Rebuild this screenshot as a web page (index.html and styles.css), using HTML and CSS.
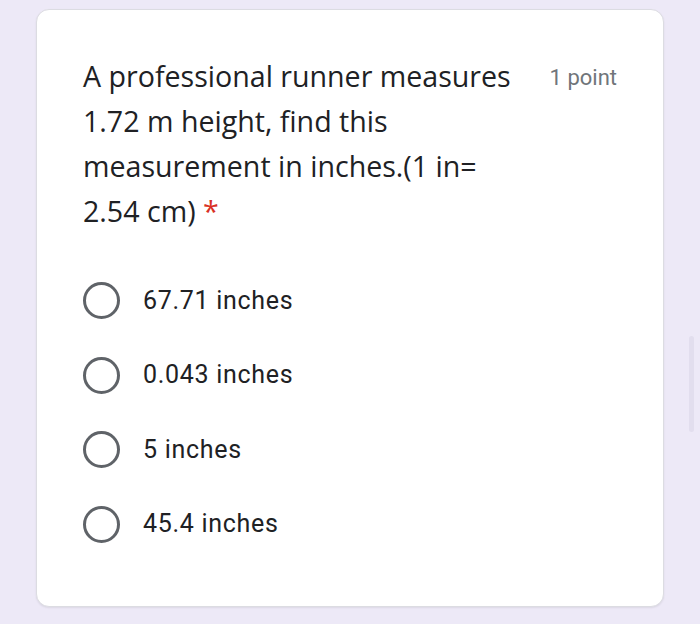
FILE: index.html
```html
<!DOCTYPE html>
<html>
<head>
<meta charset="utf-8">
<link rel="stylesheet" href="styles.css">
</head>
<body>
<div class="page">
  <div class="card">
    <div class="header">
      <div class="title">A professional runner measures<br>1.72 m height, find this<br>measurement in inches.(1 in=<br>2.54 cm) <span class="req">*</span></div>
      <div class="points">1 point</div>
    </div>
    <div class="choices">
      <div class="choice"><span class="radio"></span><span class="label">67.71 inches</span></div>
      <div class="choice"><span class="radio"></span><span class="label">0.043 inches</span></div>
      <div class="choice"><span class="radio"></span><span class="label">5 inches</span></div>
      <div class="choice"><span class="radio"></span><span class="label">45.4 inches</span></div>
    </div>
  </div>
  <div class="scrollbar"></div>
</div>
</body>
</html>
```
FILE: styles.css
```css
html, body {
  margin: 0;
  padding: 0;
  background: #ede9f7;
}
.page {
  width: 700px;
  height: 624px;
  position: relative;
  padding-top: 9px;
  box-sizing: border-box;
}
.card {
  margin-left: 36px;
  width: 628px;
  height: 598px;
  box-sizing: border-box;
  background: #fff;
  border: 1.5px solid #dcdce2;
  border-radius: 13px;
  box-shadow: 0 1px 2px rgba(0,0,0,0.08);
  padding: 43px 46px 0 46px;
}
.header {
  display: flex;
  align-items: flex-start;
}
.title {
  flex: 1;
  font-family: "Open Sans", sans-serif;
  font-size: 28.6px;
  line-height: 45px;
  color: #202124;
}
.req {
  color: #d93025;
}
.points {
  font-family: Roboto, sans-serif;
  font-size: 22px;
  color: #70757a;
  line-height: 45px;
  padding-top: 2px;
}
.choices {
  margin-top: 29px;
  display: flex;
  flex-direction: column;
}
.choice {
  display: flex;
  align-items: center;
  height: 74.5px;
}
.radio {
  width: 31px;
  height: 31px;
  border: 3px solid #5f6368;
  border-radius: 50%;
  flex: none;
  margin-top: 3px;
}
.label {
  margin-left: 23px;
  font-family: Roboto, sans-serif;
  font-size: 25px;
  letter-spacing: 0.7px;
  color: #202124;
  padding-top: 2px;
}
.scrollbar {
  position: absolute;
  left: 689px;
  top: 336px;
  width: 5px;
  height: 96px;
  background: #e2deee;
  border-radius: 3px;
}
```
